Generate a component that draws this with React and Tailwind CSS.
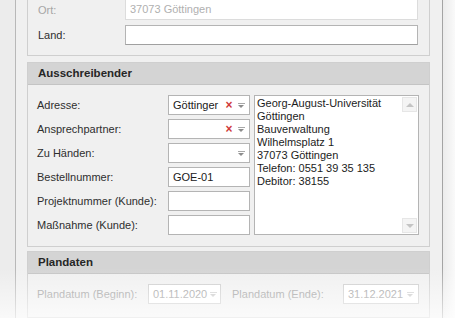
import React from 'react';

const font = { fontFamily: '"Liberation Sans", Arial, sans-serif' };

function Arrow({ muted }) {
  return (
    <span className="flex flex-col items-center w-[12px] shrink-0">
      <span className={muted ? 'w-[7px] h-px bg-[#d0d0d0] mb-px' : 'w-[7px] h-px bg-[#a8a8a8] mb-px'} />
      <span className={muted ? 'w-0 h-0 border-x-[3.5px] border-x-transparent border-t-[3px] border-t-[#c8c8c8]' : 'w-0 h-0 border-x-[3.5px] border-x-transparent border-t-[3px] border-t-[#8c8c8c]'} />
    </span>
  );
}

function Combo({ value, clear }) {
  return (
    <div className="h-[20px] w-[82px] bg-white border border-[#b4b4b4] flex items-center pl-[4px] pr-[2px]">
      <span className="flex-1 text-[#202020] truncate">{value}</span>
      {clear && <span className="text-[#d03a3a] text-[12px] font-bold w-[12px] text-center leading-none">×</span>}
      <Arrow />
    </div>
  );
}

function Field({ value, w = 'w-[82px]' }) {
  return (
    <div className={`h-[20px] ${w} bg-white border border-[#b4b4b4] flex items-center pl-[4px] text-[#202020]`}>
      {value}
    </div>
  );
}

function Header({ children }) {
  return (
    <div className="h-[22px] bg-[#d4d4d4] border-b border-[#c4c4c4] flex items-center pl-[10px] font-bold text-[11.5px] text-[#262626]">
      {children}
    </div>
  );
}

const rows = [
  ['Adresse:', <Combo key="a" value="Göttinger" clear />],
  ['Ansprechpartner:', <Combo key="b" value="" clear />],
  ['Zu Händen:', <Combo key="c" value="" />],
  ['Bestellnummer:', <Field key="d" value="GOE-01" />],
  ['Projektnummer (Kunde):', <Field key="e" />],
  ['Maßnahme (Kunde):', <Field key="f" />],
];

const address = [
  'Georg-August-Universität',
  'Göttingen',
  'Bauverwaltung',
  'Wilhelmsplatz 1',
  '37073 Göttingen',
  'Telefon: 0551 39 35 135',
  'Debitor: 38155',
];

export default function App() {
  return (
    <div className="relative w-[455px] h-[318px] overflow-hidden bg-[#ececec] text-[11px] text-[#2e2e2e]" style={font}>
      <div className="ml-[15px] w-[428px] h-full border-x border-x-[#b8b8b8] border-r-[#a4a4a4] bg-[#f0f0f0] pl-[11px] pr-[12px] flex flex-col">
        {/* Adresse (cut off) */}
        <div className="border-x border-b border-[#cfcfcf] pl-[10px] pr-[11px] pb-[10px] flex flex-col gap-[5px]">
          <div className="flex items-center h-[20px]">
            <span className="w-[87px] text-[#a6a6a6]">Ort:</span>
            <div className="flex-1 h-[20px] bg-white border border-[#dcdcdc] border-t-0 flex items-center pl-[4px] text-[#b0b0b0]">37073 Göttingen</div>
          </div>
          <div className="flex items-center h-[20px]">
            <span className="w-[87px]">Land:</span>
            <div className="flex-1 h-[20px] bg-white border border-[#b4b4b4] border-b-[#a0a0a0]" />
          </div>
        </div>

        {/* Ausschreibender */}
        <div className="mt-[6px] border border-[#cfcfcf]">
          <Header>Ausschreibender</Header>
          <div className="flex pl-[9px] pr-[10px] pt-[10px] pb-[11px]">
            <div className="flex flex-col gap-[4px]">
              {rows.map(([label, input]) => (
                <div key={label} className="flex items-center h-[20px]">
                  <span className="w-[131px]">{label}</span>
                  {input}
                </div>
              ))}
            </div>
            <div className="ml-[4px] w-[166px] h-[140px] bg-white border border-[#b4b4b4] flex">
              <div className="flex-1 pl-[2px] pt-[1px] leading-[13px] text-[#1c1c1c]">
                {address.map((l) => (
                  <div key={l}>{l}</div>
                ))}
              </div>
              <div className="w-[16px] flex flex-col justify-between py-px pr-px">
                <div className="h-[15px] bg-[#f4f4f4] border border-[#e6e6e6] flex items-center justify-center">
                  <span className="w-0 h-0 border-x-[4px] border-x-transparent border-b-[4px] border-b-[#c4c4c4]" />
                </div>
                <div className="h-[15px] bg-[#f4f4f4] border border-[#e6e6e6] flex items-center justify-center">
                  <span className="w-0 h-0 border-x-[4px] border-x-transparent border-t-[4px] border-t-[#c4c4c4]" />
                </div>
              </div>
            </div>
          </div>
        </div>

        {/* Plandaten */}
        <div className="mt-[4px] border border-[#cfcfcf] flex-1">
          <Header>Plandaten</Header>
          <div className="flex items-center pl-[9px] pt-[10px] text-[#9a9a9a]">
            <span className="w-[111px]">Plandatum (Beginn):</span>
            <div className="h-[20px] w-[73px] bg-white border border-[#cccccc] flex items-center pl-[4px] pr-[2px]">
              <span className="flex-1">01.11.2020</span>
              <Arrow muted />
            </div>
            <span className="ml-[11px] w-[111px]">Plandatum (Ende):</span>
            <div className="h-[20px] w-[76px] bg-white border border-[#cccccc] flex items-center pl-[4px] pr-[2px]">
              <span className="flex-1 overflow-hidden whitespace-nowrap">31.12.2021</span>
              <Arrow muted />
            </div>
          </div>
        </div>
      </div>

      {/* fade overlays */}
      <div className="pointer-events-none absolute left-0 right-0 bottom-0 h-[50px] bg-gradient-to-b from-white/0 to-white/70" />
      <div className="pointer-events-none absolute top-0 bottom-0 right-0 w-[12px] bg-gradient-to-r from-white/0 to-white/70" />
    </div>
  );
}
